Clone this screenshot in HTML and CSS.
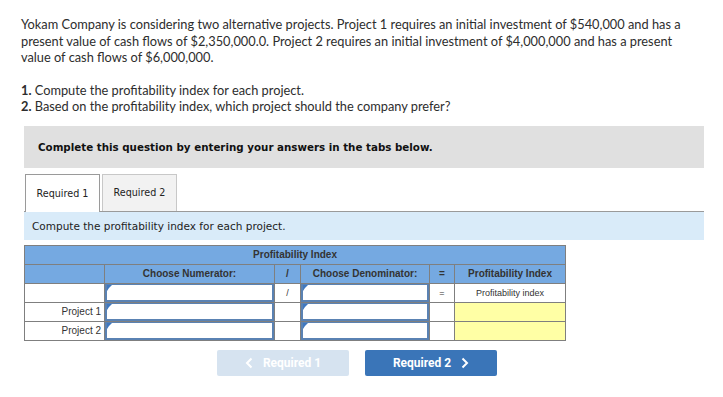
FILE: index.html
```html
<!DOCTYPE html>
<html lang="en">
<head>
    <meta charset="UTF-8">
    <meta name="viewport" content="width=device-width, initial-scale=1.0">
    <title>Profitability Index</title>
    <link rel="stylesheet" href="styles.css">
</head>
<body>
    <div class="question">
        <p class="intro">Yokam Company is considering two alternative projects. Project 1 requires an initial investment of $540,000 and has a present value of cash flows of $2,350,000.0. Project 2 requires an initial investment of $4,000,000 and has a present value of cash flows of $6,000,000.</p>

        <ol class="tasks">
            <li><b>1.</b> Compute the profitability index for each project.</li>
            <li><b>2.</b> Based on the profitability index, which project should the company prefer?</li>
        </ol>

        <div class="prompt">Complete this question by entering your answers in the tabs below.</div>

        <div class="tabs">
            <div class="tab active">Required 1</div>
            <div class="tab">Required 2</div>
        </div>

        <div class="instruction">Compute the profitability index for each project.</div>

        <table class="pi-table">
            <colgroup>
                <col class="c-label">
                <col class="c-num">
                <col class="c-op">
                <col class="c-den">
                <col class="c-op2">
                <col class="c-res">
            </colgroup>
            <tr class="head">
                <th colspan="6">Profitability Index</th>
            </tr>
            <tr class="head">
                <th></th>
                <th>Choose Numerator:</th>
                <th>/</th>
                <th>Choose Denominator:</th>
                <th>=</th>
                <th>Profitability Index</th>
            </tr>
            <tr>
                <td></td>
                <td class="cell-input"><span class="field"><input type="text"></span></td>
                <td class="op">/</td>
                <td class="cell-input"><span class="field"><input type="text"></span></td>
                <td class="op">=</td>
                <td class="result-label">Profitability index</td>
            </tr>
            <tr>
                <td class="label">Project 1</td>
                <td class="cell-input"><span class="field"><input type="text"></span></td>
                <td></td>
                <td class="cell-input"><span class="field"><input type="text"></span></td>
                <td></td>
                <td class="result"></td>
            </tr>
            <tr>
                <td class="label">Project 2</td>
                <td class="cell-input"><span class="field"><input type="text"></span></td>
                <td></td>
                <td class="cell-input"><span class="field"><input type="text"></span></td>
                <td></td>
                <td class="result"></td>
            </tr>
        </table>

        <div class="nav">
            <button class="nav-btn prev" disabled>
                <svg width="8" height="12" viewBox="0 0 8 12"><path d="M6.5 1.5 2 6l4.5 4.5" fill="none" stroke="#fff" stroke-width="2"/></svg>
                Required 1
            </button>
            <button class="nav-btn next">
                Required 2
                <svg width="8" height="12" viewBox="0 0 8 12"><path d="M1.5 1.5 6 6l-4.5 4.5" fill="none" stroke="#fff" stroke-width="2"/></svg>
            </button>
        </div>
    </div>
</body>
</html>
```

FILE: styles.css
```css
* {
    margin: 0;
    padding: 0;
    box-sizing: border-box;
}

body {
    background: #fff;
    color: #2d2d2d;
    font-family: 'Lato', 'Liberation Sans', sans-serif;
}

.question {
    padding: 16px 0 0 21px;
}

.intro {
    width: 672px;
    font-size: 12.8px;
    line-height: 16.5px;
}

.tasks {
    list-style: none;
    margin-top: 16px;
    font-size: 12.8px;
    line-height: 16.5px;
}

.tasks b {
    font-weight: 700;
}

.prompt {
    margin: 11px 0 0 3px;
    width: 680px;
    height: 42px;
    background: #e0e0e0;
    padding-left: 14px;
    display: flex;
    align-items: center;
    font-family: 'DejaVu Sans', Verdana, sans-serif;
    font-size: 10.3px;
    font-weight: bold;
    color: #111;
}

.tabs {
    display: flex;
    gap: 2px;
    margin: 6px 0 0 4px;
    height: 37px;
}

.tab {
    width: 75px;
    height: 37px;
    display: flex;
    align-items: center;
    justify-content: center;
    font-family: 'DejaVu Sans', Verdana, sans-serif;
    font-size: 9.6px;
    color: #222;
    background: #f2f2f2;
    border: 1px solid #c8c8c8;
    border-bottom: none;
}

.tab.active {
    background: #fff;
    border: 1px solid #9a9a9a;
    border-bottom: none;
    height: 38px;
    position: relative;
    z-index: 1;
}

.instruction {
    margin-left: 3px;
    width: 680px;
    height: 29px;
    background: #d9ebf9;
    border-top: 1px solid #9a9a9a;
    padding-left: 8px;
    display: flex;
    align-items: center;
    font-family: 'DejaVu Sans', Verdana, sans-serif;
    font-size: 10.5px;
    color: #222;
}

.pi-table {
    margin: 5px 0 0 3px;
    width: 541px;
    border-collapse: collapse;
    font-family: 'Liberation Sans', Arial, sans-serif;
    font-size: 10px;
    color: #333;
    table-layout: fixed;
}

.c-label { width: 80px; }
.c-num { width: 170px; }
.c-op { width: 26px; }
.c-den { width: 129px; }
.c-op2 { width: 25px; }
.c-res { width: 111px; }

.pi-table th,
.pi-table td {
    border: 1px solid #7f7f7f;
    height: 19px;
    padding: 0;
    text-align: center;
}

.pi-table tr.head th {
    background: #75a9e1;
    font-weight: bold;
    color: #333;
}

.pi-table .label {
    text-align: right;
    padding-right: 3px;
}

.pi-table .op {
    font-size: 9px;
}

.result-label {
    font-size: 9px;
}

.result {
    background: #ffffa5;
}

.field {
    display: block;
    position: relative;
    height: 18px;
}

.field::before {
    content: '';
    position: absolute;
    left: 2px;
    top: 1px;
    border-top: 3px solid #3f78c0;
    border-right: 3px solid transparent;
    border-bottom: 3px solid transparent;
    border-left: 2px solid #3f78c0;
    width: 0;
    height: 0;
}

.field input {
    display: block;
    width: 100%;
    height: 18px;
    border: 2px solid #5a82b3;
    border-top-width: 1px;
    outline: none;
    background: #fff;
}

.nav {
    display: flex;
    gap: 16px;
    margin: 9px 0 0 196px;
}

.nav-btn {
    width: 132px;
    height: 26px;
    border: none;
    border-radius: 2px;
    display: flex;
    align-items: center;
    justify-content: center;
    gap: 10px;
    font-family: 'Roboto', sans-serif;
    font-size: 12px;
    font-weight: bold;
    color: #fff;
}

.nav-btn.prev {
    background: #d6e3f0;
}

.nav-btn.next {
    background: #3a75b8;
}
```
